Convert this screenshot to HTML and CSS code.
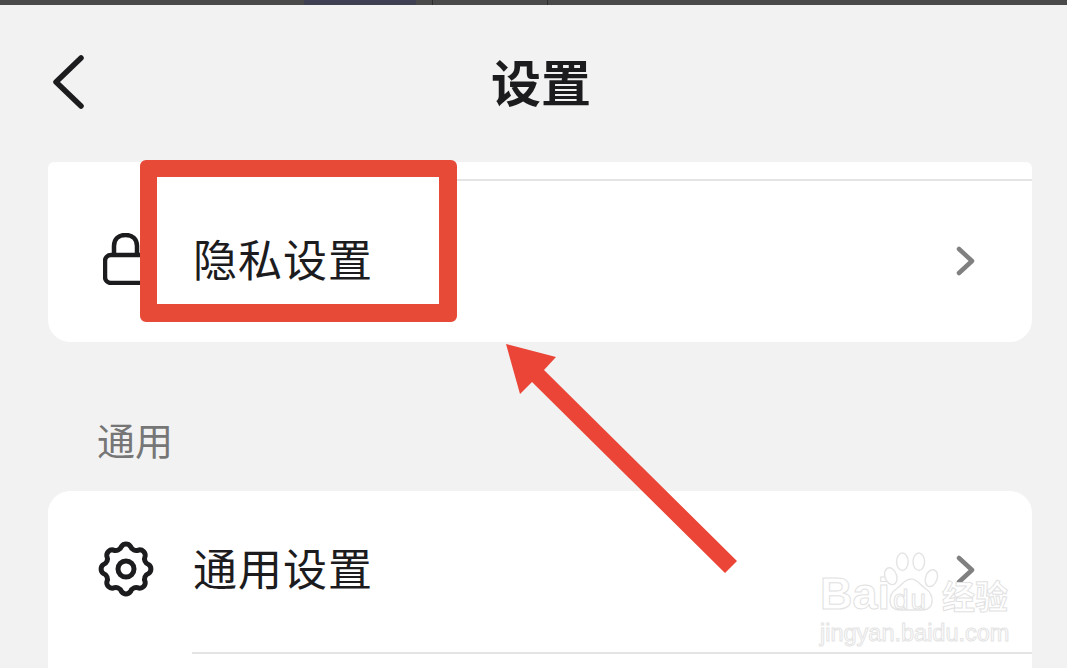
FILE: index.html

```html
<!DOCTYPE html>
<html lang="zh-CN">
<head>
    <meta charset="UTF-8" />
    <meta name="viewport" content="width=device-width, initial-scale=1" />
    <title>设置</title>
    <link rel="stylesheet" href="styles.css">
</head>
<body>
    <div class="page">
        <div class="topbar">
            <span class="tab-dark"></span>
            <span class="tab-line"></span>
        </div>

        <div class="header">
            <svg class="back" viewBox="0 0 32 54" fill="none">
                <path d="M28 3 L3 27 L28 51" />
            </svg>
            <h1>设置</h1>
        </div>

        <div class="card card-first">
            <div class="spacer"></div>
            <div class="row row-privacy">
                <svg class="icon" viewBox="0 0 46 52" fill="none">
                    <path d="M11 22 V13 C11 6 15.500 2 22.500 2 C29.500 2 34 6 34 13 V22" />
                    <rect x="2" y="22" width="42" height="28" rx="6" />
                </svg>
                <span class="label">隐私设置</span>
                <svg class="chevron" viewBox="0 0 20 30" fill="none"><path d="M3 3 L16 15 L3 27" /></svg>
            </div>
        </div>

        <div class="section">通用</div>

        <div class="card card-second">
            <div class="row row-general">
                <svg class="icon icon-gear" viewBox="-28 -28 56 56" fill="none">
                    <path d="M22.56 -4.49 A5.500 5.500 0 0 1 22.56 4.49 A6 6 0 0 0 19.12 12.78 A5.500 5.500 0 0 1 12.78 19.12 A6 6 0 0 0 4.49 22.56 A5.500 5.500 0 0 1 -4.49 22.56 A6 6 0 0 0 -12.78 19.12 A5.500 5.500 0 0 1 -19.12 12.78 A6 6 0 0 0 -22.56 4.49 A5.500 5.500 0 0 1 -22.56 -4.49 A6 6 0 0 0 -19.12 -12.78 A5.500 5.500 0 0 1 -12.78 -19.12 A6 6 0 0 0 -4.49 -22.56 A5.500 5.500 0 0 1 4.49 -22.56 A6 6 0 0 0 12.78 -19.12 A5.500 5.500 0 0 1 19.12 -12.78 A6 6 0 0 0 22.56 -4.49 Z" />
                    <circle cx="0" cy="0" r="8" />
                </svg>
                <span class="label">通用设置</span>
                <svg class="chevron" viewBox="0 0 20 30" fill="none"><path d="M3 3 L16 15 L3 27" /></svg>
            </div>
            <div class="divider"></div>
        </div>

        <!-- annotations on top of the screenshot -->
        <div class="mark-box"></div>
        <svg class="mark-arrow" viewBox="0 0 240 240">
            <polygon points="6,4 56,17 44,30 237,221 225,233 32,42 20,54" />
        </svg>

        <div class="watermark">
            <div class="wm-top">
                <span class="wm-bai">Bai</span>
                <svg class="wm-paw" viewBox="0 0 60 62" fill="#fff" stroke="#e4e4e4" stroke-width="1.500">
                    <ellipse cx="19" cy="10" rx="6" ry="9" />
                    <ellipse cx="36" cy="10" rx="6" ry="9" />
                    <ellipse cx="7" cy="25" rx="6" ry="9" transform="rotate(-20 7 25)" />
                    <ellipse cx="49" cy="27" rx="6" ry="9" transform="rotate(20 49 27)" />
                    <path d="M28 28 C35 28 37 34 43 38 C52 44 53 59 40 60 H16 C3 59 4 44 13 38 C19 34 21 28 28 28 Z" />
                </svg>
                <span class="wm-du">du</span>
                <span class="wm-cn">经验</span>
            </div>
            <div class="wm-url">jingyan.baidu.com</div>
        </div>
    </div>
</body>
</html>
```

FILE: styles.css

```css
* { box-sizing: border-box; }
html, body { margin: 0; padding: 0; }
body { font-family: "Noto Sans CJK SC", "Noto Sans", sans-serif; background: #f2f2f2; color: #1c1c1e; }
.page { position: relative; width: 1067px; height: 668px; overflow: hidden; background: #f2f2f2; }

.topbar { display: flex; height: 5px; padding-left: 304px; background: #4a4a4a; }
.tab-dark { width: 112px; background: #3f4152; }
.tab-line { width: 116px; margin-left: 16px; border-left: 1px solid #2e2e2e; border-right: 1px solid #2e2e2e; }

.header { display: flex; align-items: center; height: 157px; padding: 0 70px 0 53px; }
.back { width: 32px; height: 54px; margin-top: -4px; }
.back path { stroke: #1c1c1e; stroke-width: 5.500; stroke-linecap: round; stroke-linejoin: round; }
h1 { flex: 1; margin: -7px 0 0 0; font-size: 50px; line-height: 60px; font-weight: 700; text-align: center; }

.card { width: 984px; margin-left: 48px; background: #fff; }
.card-first { height: 180px; border-radius: 6px 6px 22px 22px; }
.card-second { height: 200px; border-radius: 22px; }
.spacer { height: 19px; margin-left: 400px; border-bottom: 2px solid #e4e4e4; }

.row { display: flex; align-items: center; padding: 0 56px 0 50px; }
.row-privacy { height: 161px; }
.row-general { height: 161px; padding-bottom: 4px; }
.row-privacy .icon { width: 46px; height: 52px; margin: -6px 44px 0 5px; }
.row-general .icon { width: 56px; height: 56px; margin: -2px 39px 0 0; }
.icon path, .icon rect, .icon circle { stroke: #1c1c1e; stroke-width: 4.500; stroke-linejoin: round; }
.icon-gear path, .icon-gear circle { stroke-width: 5; }
.label { flex: 1; font-size: 44px; line-height: 54px; letter-spacing: 1px; }
.row-privacy .label { margin-top: -8px; }
.row-general .label { margin-top: -5px; }
.chevron { width: 20px; height: 30px; }
.row-privacy .chevron { margin-top: -2px; }
.chevron path { stroke: #808080; stroke-width: 4.500; stroke-linecap: round; stroke-linejoin: round; }
.divider { height: 2px; margin-left: 144px; background: #e4e4e4; }

.section { height: 149px; padding: 74px 0 0 97px; font-size: 38px; line-height: 46px; color: #767676; }

.mark-box { position: absolute; left: 140px; top: 160px; width: 317px; height: 162px; border: solid #e84a38; border-width: 17px 18px 18px 17px; border-radius: 6px; }
.mark-arrow { position: absolute; left: 500px; top: 340px; width: 240px; height: 240px; }
.mark-arrow polygon { fill: #ea4536; }

.watermark { position: absolute; left: 820px; top: 551px; width: 195px; }
.wm-top { position: relative; display: flex; align-items: flex-end; height: 62px; }
.wm-bai, .wm-du, .wm-cn, .wm-url { font-family: "Liberation Sans", sans-serif; color: #fff; -webkit-text-stroke: 1px #e2e2e2; }
.wm-bai { width: 64px; margin-bottom: -4px; font-size: 45px; line-height: 46px; font-weight: 700; }
.wm-paw { width: 58px; height: 62px; }
.wm-du { position: absolute; left: 73px; top: 34px; font-size: 28px; line-height: 30px; letter-spacing: 2px; }
.wm-cn { margin-bottom: -4px; font-family: "Noto Sans CJK SC", sans-serif; font-size: 33px; line-height: 44px; font-weight: 700; }
.wm-url { margin-top: 6px; font-size: 23.500px; line-height: 28px; white-space: nowrap; -webkit-text-stroke: 1px #e4e4e4; }
```
